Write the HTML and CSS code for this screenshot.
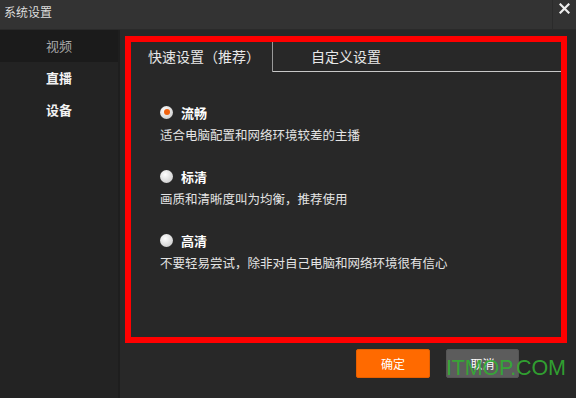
FILE: index.html
```html
<!DOCTYPE html>
<html lang="zh">
<head>
    <meta charset="UTF-8">
    <meta name="viewport" content="width=device-width, initial-scale=1.0">
    <title>系统设置</title>
    <link rel="stylesheet" href="styles.css">
</head>
<body>
    <div class="window">
        <div class="titlebar">
            <span class="title">系统设置</span>
            <span class="close">
                <svg width="11" height="11" viewBox="0 0 11 11">
                    <path d="M1.5 1.5 L9.5 9.5 M9.5 1.5 L1.5 9.5" stroke="#eee" stroke-width="2.2" stroke-linecap="square"/>
                </svg>
            </span>
        </div>

        <div class="main">
            <ul class="sidebar">
                <li class="active">视频</li>
                <li>直播</li>
                <li>设备</li>
            </ul>

            <div class="content">
                <div class="panel">
                    <div class="tabs">
                        <div class="tab current">快速设置（推荐）</div>
                        <div class="tab">自定义设置</div>
                    </div>

                    <div class="options">
                        <div class="option">
                            <label class="row"><span class="radio checked"></span>流畅</label>
                            <p class="desc">适合电脑配置和网络环境较差的主播</p>
                        </div>
                        <div class="option">
                            <label class="row"><span class="radio"></span>标清</label>
                            <p class="desc">画质和清晰度叫为均衡，推荐使用</p>
                        </div>
                        <div class="option">
                            <label class="row"><span class="radio"></span>高清</label>
                            <p class="desc">不要轻易尝试，除非对自己电脑和网络环境很有信心</p>
                        </div>
                    </div>
                </div>

                <div class="buttons">
                    <button class="btn ok">确定</button>
                    <button class="btn cancel">取消</button>
                </div>
            </div>
        </div>

        <div class="watermark">ITMOP.COM</div>
    </div>
</body>
</html>
```

FILE: styles.css
```css
html, body {
    margin: 0;
    padding: 0;
    background-color: #282828;
}

.window {
    position: relative;
    width: 576px;
    height: 398px;
    overflow: hidden;
    font-family: "Noto Sans CJK SC", "Liberation Sans", sans-serif;
    color: #eee;
}

.titlebar {
    display: flex;
    align-items: center;
    justify-content: space-between;
    height: 30px;
    background-color: #333;
    border-bottom: 1px solid #2a2a2a;
    box-sizing: border-box;
}

.title {
    padding-left: 4px;
    font-size: 12px;
    color: #ddd;
    margin-top: -6px;
}

.close {
    display: flex;
    justify-content: center;
    width: 24px;
    height: 30px;
    padding-top: 3px;
    box-sizing: border-box;
    border-left: 1px solid #2b2b2b;
}

.main {
    display: flex;
    height: 368px;
}

.sidebar {
    list-style: none;
    margin: 0;
    padding: 0;
    width: 118px;
    background-color: #232323;
    border-right: 2px solid #1e1e1e;
}

.sidebar li {
    height: 32px;
    line-height: 32px;
    text-align: center;
    font-size: 13px;
    font-weight: bold;
    color: #f2f2f2;
}

.sidebar li.active {
    background-color: #1b1b1b;
    color: #a8a8a8;
    font-weight: normal;
}

.content {
    flex: 1;
    padding: 6px 9px 0 5px;
    background-color: #282828;
}

.panel {
    height: 307px;
    border: 6px solid #ff0000;
    box-sizing: border-box;
}

.tabs {
    display: flex;
    height: 30px;
}

.tab {
    font-size: 14px;
    line-height: 29px;
    color: #e8e8e8;
    box-sizing: border-box;
}

.tab.current {
    width: 142px;
    padding-left: 17px;
    border-right: 1px solid #9a9a9a;
}

.tab:not(.current) {
    flex: 1;
    padding-left: 38px;
    border-bottom: 1px solid #c8c8c8;
}

.options {
    padding: 30px 0 0 29px;
}

.option {
    margin-bottom: 21px;
}

.row {
    display: flex;
    align-items: center;
    height: 20px;
    font-size: 13px;
    font-weight: bold;
    color: #fff;
}

.radio {
    width: 13px;
    height: 13px;
    margin-right: 8px;
    border-radius: 50%;
    background: radial-gradient(circle at 40% 35%, #ffffff, #d4d4d4 70%, #bdbdbd);
    position: relative;
}

.radio.checked::after {
    content: "";
    position: absolute;
    left: 3.5px;
    top: 3.5px;
    width: 6px;
    height: 6px;
    border-radius: 50%;
    background-color: #f0620f;
}

.desc {
    margin: 3px 0 0 0;
    height: 20px;
    line-height: 20px;
    font-size: 12.5px;
    color: #e4e4e4;
}

.buttons {
    display: flex;
    gap: 16px;
    margin-top: 6px;
    padding-left: 231px;
}

.btn {
    width: 74px;
    height: 29px;
    border: none;
    border-radius: 2px;
    font-family: "Noto Sans CJK SC", sans-serif;
    font-size: 12px;
    color: #fff;
}

.btn.ok {
    background-color: #ff6a00;
    border: 1px solid #e45f00;
}

.btn.cancel {
    width: 73px;
    background-color: #5c5c5c;
    border: 1px solid #555;
}

/* watermark sits over the cancel button, as in the screenshot */
.watermark {
    position: absolute;
    left: 446px;
    top: 356px;
    font-family: "Liberation Sans", sans-serif;
    font-size: 21.5px;
    color: rgba(50, 175, 50, 0.9);
    letter-spacing: -0.2px;
}
```
